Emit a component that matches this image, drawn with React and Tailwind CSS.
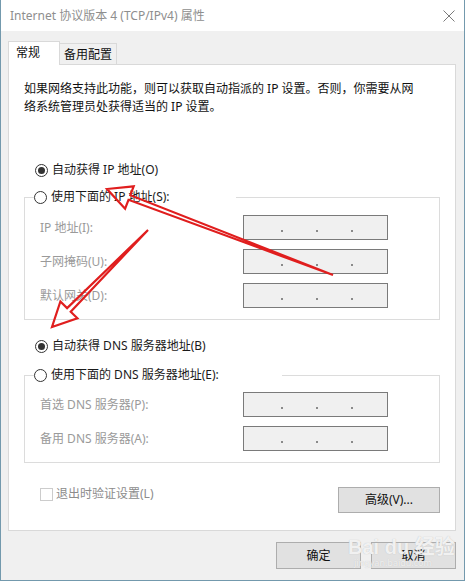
import React from 'react';

const Radio = ({ checked }) => (
  <span className="w-[13px] h-[13px] rounded-full border border-[#333] bg-white flex items-center justify-center shrink-0">
    {checked && <span className="w-[7px] h-[7px] rounded-full bg-[#333]" />}
  </span>
);

const RadioRow = ({ checked, label }) => (
  <div className="flex items-center h-[16px] pl-[11px]">
    <Radio checked={checked} />
    <span className="ml-[4px] text-[#1a1a1a]">{label}</span>
  </div>
);

const IpField = ({ label }) => (
  <div className="flex items-center h-[25px] pl-[15px]">
    <span className="w-[203px] text-[#9a9a9a]">{label}</span>
    <div className="w-[145px] h-[25px] border border-[#7a7a7a] bg-[#f0f0f0] flex items-start pt-[14px] pl-[37px] gap-[33px]">
      <span className="w-[2px] h-[2px] bg-[#8a8a8a]" />
      <span className="w-[2px] h-[2px] bg-[#8a8a8a]" />
      <span className="w-[2px] h-[2px] bg-[#8a8a8a]" />
    </div>
  </div>
);

const GroupBox = ({ legend, legendWidth, top, children }) => (
  <fieldset className={`border border-[#dcdcdc] px-0 ${top}`}>
    <legend className={`ml-[9px] h-[16px] ${legendWidth}`}>
      <span className="flex items-center h-[16px]">
        <Radio />
        <span className="ml-[4px] text-[#1a1a1a]">{legend}</span>
      </span>
    </legend>
    {children}
  </fieldset>
);

const App = () => {
  return (
    <div className="relative w-[465px] h-[581px] bg-[#f0f0f0] border-x border-b border-[#7399ad] flex flex-col text-[12px] leading-[18px] font-['Noto_Sans','Noto_Sans_CJK_SC',sans-serif] overflow-hidden">
      {/* title bar */}
      <div className="h-[31px] bg-white flex items-center pl-[9px] shrink-0">
        <span className="text-[#8e8e8e]">Internet 协议版本 4 (TCP/IPv4) 属性</span>
        <svg className="ml-auto mr-[9px]" width="12" height="12" viewBox="0 0 12 12">
          <path d="M0.5 0.5 L11.5 11.5 M11.5 0.5 L0.5 11.5" stroke="#7a7a7a" strokeWidth="1" fill="none" />
        </svg>
      </div>

      <div className="pl-[7px] pr-[8px] pt-[10px] flex flex-col">
        {/* tabs */}
        <div className="flex items-end h-[24px]">
          <div className="relative z-10 h-[24px] w-[52px] bg-white border-l border-t border-r border-[#d9d9d9] flex items-center pl-[7px] pb-[2px] text-[#111]">
            常规
          </div>
          <div className="h-[22px] w-[57px] border-t border-r border-[#d9d9d9] flex items-center pl-[4px] text-[#111]">
            备用配置
          </div>
        </div>

        {/* tab panel */}
        <div className="-mt-px bg-white border border-[#d9d9d9] px-[15px] pt-[15px] pb-[17px] flex flex-col">
          <p className="text-[#111] pl-0">
            如果网络支持此功能，则可以获取自动指派的 IP 设置。否则，你需要从网
            <br />
            络系统管理员处获得适当的 IP 设置。
          </p>

          <div className="mt-[46px]">
            <RadioRow checked label="自动获得 IP 地址(O)" />
          </div>

          <GroupBox legend="使用下面的 IP 地址(S):" legendWidth="w-[202px]" top="mt-[11px]">
            <div className="flex flex-col gap-[9px] pt-[10px] pb-[11px]">
              <IpField label="IP 地址(I):" />
              <IpField label="子网掩码(U):" />
              <IpField label="默认网关(D):" />
            </div>
          </GroupBox>

          <div className="mt-[18px]">
            <RadioRow checked label="自动获得 DNS 服务器地址(B)" />
          </div>

          <GroupBox legend="使用下面的 DNS 服务器地址(E):" legendWidth="w-[248px]" top="mt-[13px]">
            <div className="flex flex-col gap-[9px] pt-[9px] pb-[11px]">
              <IpField label="首选 DNS 服务器(P):" />
              <IpField label="备用 DNS 服务器(A):" />
            </div>
          </GroupBox>

          <div className="flex justify-between items-start mt-[24px]">
            <label className="flex items-center h-[14px] pl-[16px] text-[#8c8c8c]">
              <span className="w-[13px] h-[13px] border border-[#cccccc] bg-white shrink-0" />
              <span className="ml-[3px]">退出时验证设置(L)</span>
            </label>
            <button className="w-[102px] h-[26px] bg-[#e1e1e1] border border-[#adadad] text-[#111] flex items-center justify-center">
              高级(V)...
            </button>
          </div>
        </div>

        {/* dialog buttons */}
        <div className="flex justify-end gap-[10px] mt-[11px]">
          <button className="w-[85px] h-[27px] bg-[#e1e1e1] border border-[#adadad] text-[#111] flex items-center justify-center">
            确定
          </button>
          <button className="w-[85px] h-[27px] bg-[#e1e1e1] border border-[#adadad] text-[#111] flex items-center justify-center">
            取消
          </button>
        </div>
      </div>

      {/* watermark */}
      <div className="absolute left-[347px] top-[536px] pointer-events-none flex flex-col items-start">
        <span className="text-[20px] leading-[22px] font-bold text-white/80 font-['Liberation_Sans','Noto_Sans_CJK_SC',sans-serif] [text-shadow:0_0_1px_#b5b5b5]">
          Bai du 经验
        </span>
        <span className="text-[9px] leading-[10px] text-white/70 ml-[6px] [text-shadow:0_0_1px_#c0c0c0]">jingyan.baidu.com</span>
      </div>

      {/* red annotation arrows */}
      <svg className="absolute -left-px top-0 pointer-events-none" width="465" height="581" viewBox="0 0 465 581">
        <polygon
          points="333,275 128.5,199.8 125.1,208.7 107,189 133.7,186.3 130.3,195.2"
          fill="none"
          stroke="#e01e1e"
          strokeWidth="2.2"
          strokeLinejoin="miter"
        />
        <polygon
          points="148,230 70.7,311.7 77.4,318.3 52,327 60.4,301.5 67.1,308.1"
          fill="none"
          stroke="#e01e1e"
          strokeWidth="2.2"
          strokeLinejoin="miter"
        />
      </svg>
    </div>
  );
};

export default App;
